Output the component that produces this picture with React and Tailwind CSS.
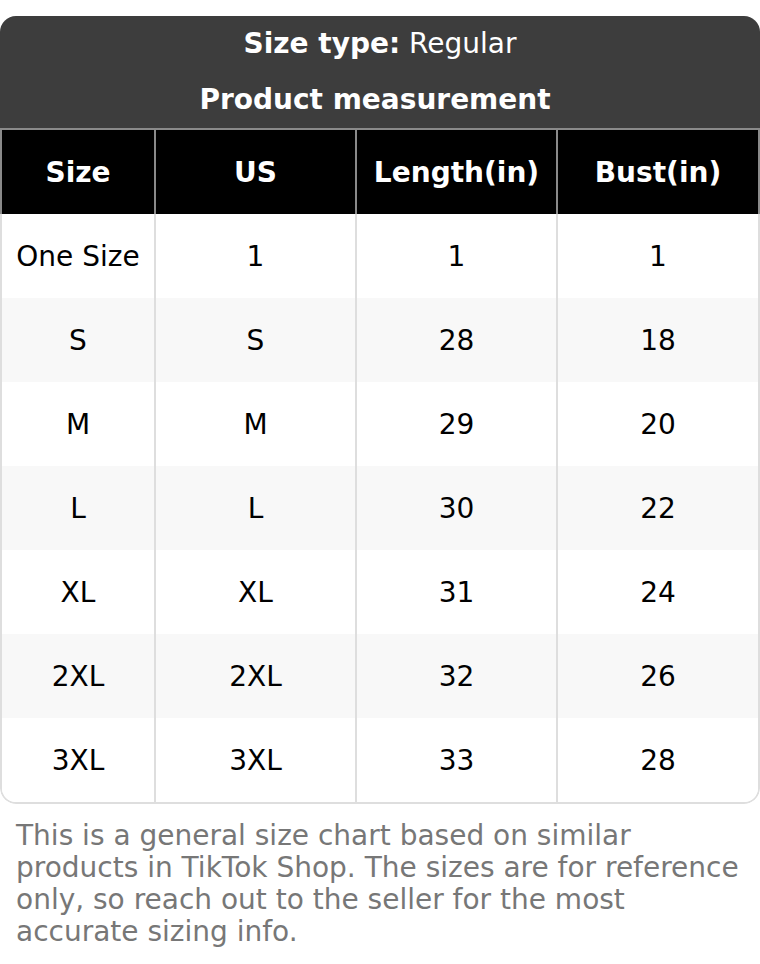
import React from "react";

const rows = [
  ["One Size", "1", "1", "1"],
  ["S", "S", "28", "18"],
  ["M", "M", "29", "20"],
  ["L", "L", "30", "22"],
  ["XL", "XL", "31", "24"],
  ["2XL", "2XL", "32", "26"],
  ["3XL", "3XL", "33", "28"],
];

const heads = ["Size", "US", "Length(in)", "Bust(in)"];

export default function App() {
  return (
    <div
      className="w-[760px] bg-white pt-4 pb-4"
      style={{ fontFamily: '"DejaVu Sans", sans-serif' }}
    >
      <div className="rounded-[16px] overflow-hidden">
        <div className="bg-[#3d3d3d] text-white text-[28px] leading-[34px]">
          <div className="h-[56px] flex items-center justify-center">
            <span className="font-bold">Size type:</span>
            <span>&nbsp;Regular</span>
          </div>
          <div className="h-[56px] flex items-center justify-center font-bold pr-[10px]">
            Product measurement
          </div>
        </div>
        <div className="border-t-2 border-x-2 border-[#8a8a8a] bg-black grid grid-cols-[152px_201px_201px_1fr]">
          {heads.map((h, i) => (
            <div
              key={h}
              className={
                "h-[84px] pt-[2px] flex items-center justify-center text-white font-bold text-[28px] " +
                (i > 0 ? "border-l-2 border-[#8a8a8a]" : "")
              }
            >
              {h}
            </div>
          ))}
        </div>
        <div className="border-x-2 border-b-2 border-[#dedede] rounded-b-[16px] overflow-hidden">
          {rows.map((r, ri) => (
            <div
              key={ri}
              className={
                "grid grid-cols-[152px_201px_201px_1fr] " +
                (ri % 2 === 1 ? "bg-[#f8f8f8]" : "bg-white")
              }
            >
              {r.map((c, ci) => (
                <div
                  key={ci}
                  className={
                    "h-[84px] pt-[2px] flex items-center justify-center text-black text-[28px] " +
                    (ci > 0 ? "border-l-2 border-[#dedede]" : "")
                  }
                >
                  {c}
                </div>
              ))}
            </div>
          ))}
        </div>
      </div>
      <p className="pt-[16px] px-4 text-[28px] leading-[32px] text-[#777777]">
        This is a general size chart based on similar products in TikTok Shop.
        The sizes are for reference only, so reach out to the seller for the
        most accurate sizing info.
      </p>
    </div>
  );
}
